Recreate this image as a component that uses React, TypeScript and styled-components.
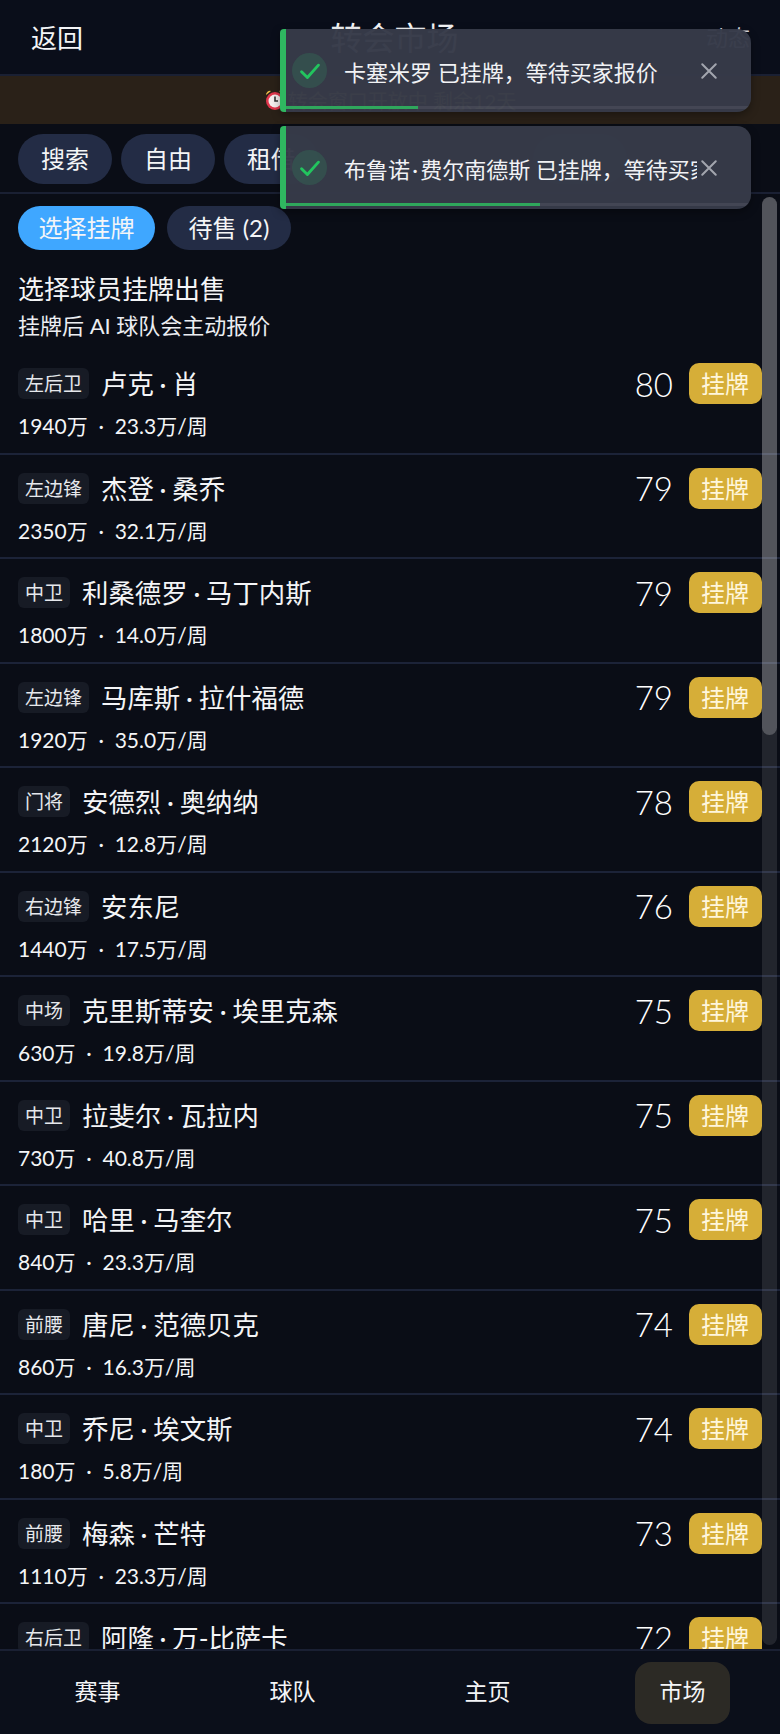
import React from "react";
import styled, { createGlobalStyle } from "styled-components";

const FONT = `Lato, "Noto Sans CJK SC", sans-serif`;

const Global = createGlobalStyle`
  html, body { margin: 0; padding: 0; background: #0a0d16; }
  * { box-sizing: border-box; }
`;

const Page = styled.div`
  position: relative;
  width: 780px;
  height: 1734px;
  display: flex;
  flex-direction: column;
  overflow: hidden;
  background: #0a0d16;
  color: #f4f5f7;
  font-family: ${FONT};
`;

const Header = styled.header`
  height: 76px;
  flex: none;
  display: flex;
  align-items: center;
  justify-content: space-between;
  padding: 0 30px 2px 31px;
  background: #0a0e1a;
  border-bottom: 2px solid #1a2033;
`;

const Back = styled.span`
  font-size: 26px;
`;

const Title = styled.h1`
  margin: 0;
  font-size: 32px;
  font-weight: 400;
`;

const HeaderLink = styled.span`
  font-size: 22px;
  color: #d8dbe2;
`;

const Banner = styled.div`
  height: 48px;
  flex: none;
  display: flex;
  align-items: center;
  justify-content: center;
  gap: 2px;
  background: #2a2118;
  color: #e9c46a;
  font-size: 20px;
`;

const Filters = styled.div`
  height: 70px;
  flex: none;
  display: flex;
  align-items: flex-start;
  gap: 9px;
  padding: 10px 18px 0;
  overflow: hidden;
  border-bottom: 2px solid #1a2033;
`;

const Chip = styled.span<{ $offset?: number }>`
  flex: none;
  width: 94px;
  height: 50px;
  display: flex;
  align-items: center;
  justify-content: center;
  padding-bottom: 3px;
  margin-left: ${(p) => p.$offset ?? 0}px;
  border-radius: 25px;
  background: #232c45;
  font-size: 24px;
`;

const Body = styled.main`
  position: relative;
  flex: 1;
  min-height: 0;
  overflow: hidden;
`;

const Tabs = styled.div`
  display: grid;
  grid-template-columns: 137px 124px;
  gap: 12px;
  padding: 12px 18px 0;
`;

const Tab = styled.span<{ $active?: boolean }>`
  height: 44px;
  padding-bottom: 3px;
  display: flex;
  align-items: center;
  justify-content: center;
  border-radius: 22px;
  font-size: 24px;
  background: ${(p) => (p.$active ? "#3fa7ff" : "#232c45")};
`;

const Intro = styled.div`
  padding: 20px 18px 0;
  height: 100px;
`;

const Heading = styled.h2`
  margin: 0;
  font-size: 26px;
  font-weight: 400;
  line-height: 38px;
`;

const Sub = styled.p`
  margin: 0;
  font-size: 22px;
  line-height: 36px;
  color: #eceef2;
`;

const Row = styled.div`
  height: 104.5px;
  padding: 13px 18px 0;
  display: flex;
  justify-content: space-between;
  align-items: flex-start;
  border-bottom: 2px solid #1c2338;
`;

const RowMain = styled.div`
  display: flex;
  flex-direction: column;
`;

const NameLine = styled.div`
  height: 41px;
  display: flex;
  align-items: center;
  gap: 12px;
`;

const Tag = styled.span`
  height: 31px;
  padding: 0 7px 2px;
  display: flex;
  align-items: center;
  border-radius: 6px;
  background: #171b25;
  color: #e6e8ec;
  font-size: 19px;
`;

const Name = styled.span`
  font-size: 26.4px;
  padding-bottom: 2px;
`;

const Dot = styled.span`
  padding: 0 0.22em;
`;

const Stats = styled.div`
  margin-top: 7px;
  font-size: 21px;
  line-height: 30px;
  white-space: pre;
`;

const RowSide = styled.div`
  display: flex;
  align-items: center;
  gap: 16px;
`;

const Score = styled.span`
  font-size: 33px;
  font-weight: 300;
  color: #ffffff;
`;

const ListButton = styled.span`
  width: 73px;
  height: 41px;
  display: flex;
  align-items: center;
  justify-content: center;
  padding: 0 1px 2px 0;
  border-radius: 10px;
  background: #d6ae38;
  color: #fff6dc;
  font-size: 24px;
`;

const ScrollTrack = styled.div`
  position: absolute;
  top: 3px;
  left: 762px;
  width: 15px;
  height: 1448px;
  border-radius: 8px;
  background: rgba(255, 255, 255, 0.1);
`;

const ScrollThumb = styled.div`
  width: 15px;
  height: 538px;
  border-radius: 8px;
  background: rgba(255, 255, 255, 0.22);
`;

const Nav = styled.nav`
  height: 85px;
  flex: none;
  display: grid;
  grid-template-columns: repeat(4, 1fr);
  align-items: center;
  justify-items: center;
  background: #0b0f1a;
  border-top: 2px solid #1a2033;
`;

const NavItem = styled.span<{ $active?: boolean }>`
  width: 95px;
  height: 62px;
  display: flex;
  align-items: center;
  justify-content: center;
  padding-bottom: 5px;
  border-radius: 16px;
  font-size: 23px;
  background: ${(p) => (p.$active ? "#2c2a25" : "transparent")};
`;

const ToastStack = styled.div`
  position: absolute;
  top: 29px;
  left: 280px;
  width: 471px;
  display: flex;
  flex-direction: column;
  gap: 14px;
`;

const Toast = styled.div`
  position: relative;
  height: 83px;
  display: flex;
  align-items: center;
  padding: 0 30px 0 6px;
  overflow: hidden;
  border-left: 6px solid #2fb760;
  border-radius: 4px 14px 14px 4px;
  background: rgba(54, 58, 73, 0.975);
  box-shadow: 0 3px 8px rgba(0, 0, 0, 0.35);
`;

const ToastIcon = styled.span`
  flex: none;
  width: 35px;
  height: 35px;
  display: flex;
  align-items: center;
  justify-content: center;
  border-radius: 50%;
  background: rgba(46, 204, 113, 0.15);
  color: #22c55e;
`;

const ToastText = styled.div`
  flex: 1;
  min-width: 0;
  margin-left: 17px;
  overflow: hidden;
  white-space: nowrap;
  font-size: 22px;
  color: #f1f2f5;

  ${Dot} {
    padding: 0 0.1em;
  }
`;

const ToastClose = styled.span`
  flex: none;
  width: 24px;
  display: flex;
  justify-content: center;
  color: #a2a5ae;
`;

const ProgressTrack = styled.div`
  position: absolute;
  left: 0;
  right: 0;
  bottom: 3px;
  height: 3px;
  background: rgba(255, 255, 255, 0.07);
`;

const ProgressBar = styled.div`
  height: 100%;
  background: #2fa75c;
`;

const players = [
  ["左后卫", "卢克·肖", "1940万  ·  23.3万/周", 80],
  ["左边锋", "杰登·桑乔", "2350万  ·  32.1万/周", 79],
  ["中卫", "利桑德罗·马丁内斯", "1800万  ·  14.0万/周", 79],
  ["左边锋", "马库斯·拉什福德", "1920万  ·  35.0万/周", 79],
  ["门将", "安德烈·奥纳纳", "2120万  ·  12.8万/周", 78],
  ["右边锋", "安东尼", "1440万  ·  17.5万/周", 76],
  ["中场", "克里斯蒂安·埃里克森", "630万  ·  19.8万/周", 75],
  ["中卫", "拉斐尔·瓦拉内", "730万  ·  40.8万/周", 75],
  ["中卫", "哈里·马奎尔", "840万  ·  23.3万/周", 75],
  ["前腰", "唐尼·范德贝克", "860万  ·  16.3万/周", 74],
  ["中卫", "乔尼·埃文斯", "180万  ·  5.8万/周", 74],
  ["前腰", "梅森·芒特", "1110万  ·  23.3万/周", 73],
  ["右后卫", "阿隆·万-比萨卡", "", 72],
] as const;

const toasts = [
  { name: "卡塞米罗", progress: 132 },
  { name: "布鲁诺·费尔南德斯", progress: 254 },
];

const PlayerName = ({ value }: { value: string }) => {
  const [first, ...rest] = value.split("·");
  return (
    <>
      {first}
      {rest.map((part) => (
        <React.Fragment key={part}>
          <Dot>·</Dot>
          {part}
        </React.Fragment>
      ))}
    </>
  );
};

const AlarmIcon = () => (
  <svg width="22" height="24" viewBox="0 0 22 24" aria-hidden="true">
    <path d="M2 7a4 4 0 0 1 5-4z" fill="#f0c04a" />
    <path d="M20 7a4 4 0 0 0-5-4z" fill="#f0c04a" />
    <circle cx="11" cy="13" r="9" fill="#e0364c" />
    <circle cx="11" cy="13" r="6.5" fill="#f4eeee" />
    <path d="M11 8.5V13h3" stroke="#333" strokeWidth="1.6" fill="none" />
  </svg>
);

const CheckIcon = () => (
  <svg width="26" height="26" viewBox="0 0 20 20" fill="none" aria-hidden="true">
    <path d="M3.5 10.5l4.5 4.5 8.5-9.5" stroke="currentColor" strokeWidth="2.2" strokeLinecap="round" strokeLinejoin="round" />
  </svg>
);

const CloseIcon = () => (
  <svg width="18" height="18" viewBox="0 0 16 16" fill="none" aria-hidden="true">
    <path d="M2 2l12 12M14 2L2 14" stroke="currentColor" strokeWidth="1.8" strokeLinecap="round" />
  </svg>
);

export default function App() {
  return (
    <Page>
      <Global />
      <Header>
        <Back>返回</Back>
        <Title>转会市场</Title>
        <HeaderLink>动态</HeaderLink>
      </Header>
      <Banner>
        <AlarmIcon />
        <span>转会窗口开放中 剩余12天</span>
      </Banner>
      <Filters>
        <Chip>搜索</Chip>
        <Chip>自由</Chip>
        <Chip>租借</Chip>
        <Chip $offset={206} />
      </Filters>
      <Body>
        <Tabs>
          <Tab $active>选择挂牌</Tab>
          <Tab>待售 (2)</Tab>
        </Tabs>
        <Intro>
          <Heading>选择球员挂牌出售</Heading>
          <Sub>挂牌后 AI 球队会主动报价</Sub>
        </Intro>
        {players.map(([pos, name, stats, score]) => (
          <Row key={name}>
            <RowMain>
              <NameLine>
                <Tag>{pos}</Tag>
                <Name>
                  <PlayerName value={name} />
                </Name>
              </NameLine>
              <Stats>{stats}</Stats>
            </RowMain>
            <RowSide>
              <Score>{score}</Score>
              <ListButton>挂牌</ListButton>
            </RowSide>
          </Row>
        ))}
        <ScrollTrack>
          <ScrollThumb />
        </ScrollTrack>
      </Body>
      <Nav>
        <NavItem>赛事</NavItem>
        <NavItem>球队</NavItem>
        <NavItem>主页</NavItem>
        <NavItem $active>市场</NavItem>
      </Nav>
      <ToastStack>
        {toasts.map((t) => (
          <Toast key={t.name}>
            <ToastIcon>
              <CheckIcon />
            </ToastIcon>
            <ToastText>
              <PlayerName value={t.name} /> 已挂牌，等待买家报价
            </ToastText>
            <ToastClose>
              <CloseIcon />
            </ToastClose>
            <ProgressTrack>
              <ProgressBar style={{ width: t.progress }} />
            </ProgressTrack>
          </Toast>
        ))}
      </ToastStack>
    </Page>
  );
}
